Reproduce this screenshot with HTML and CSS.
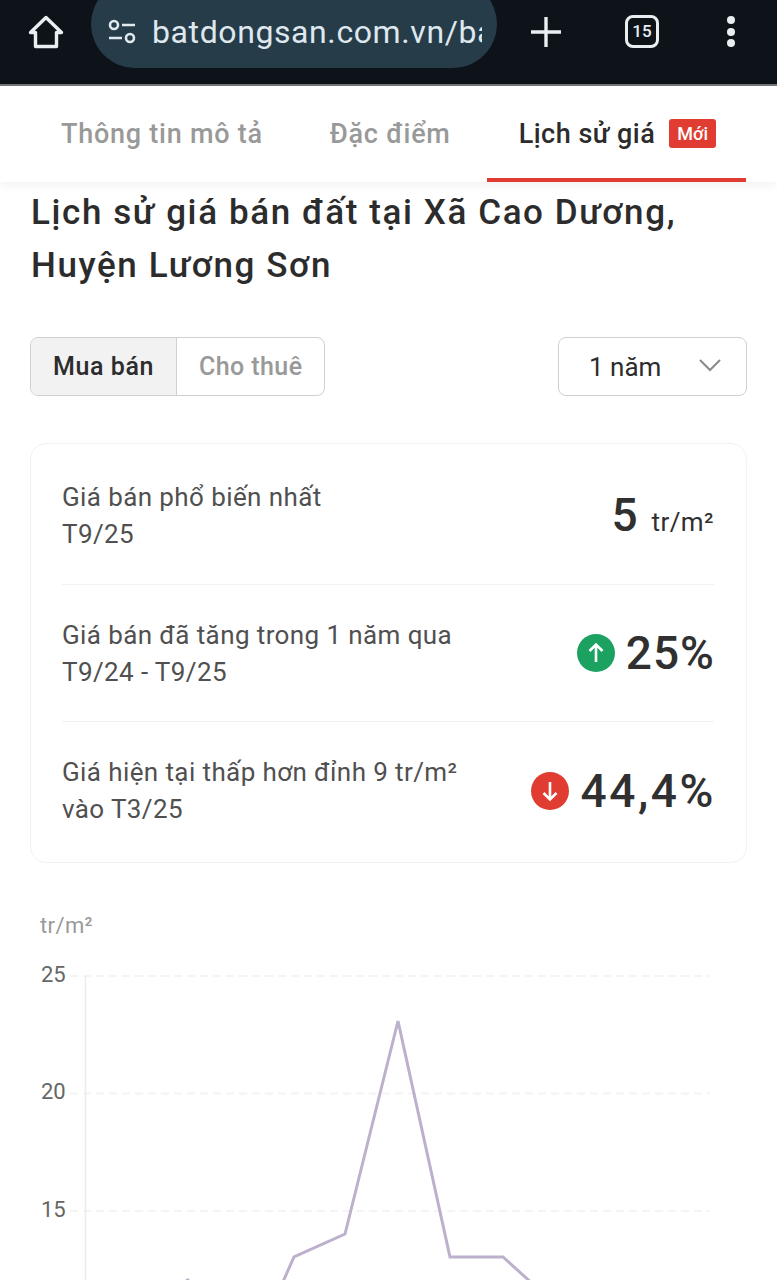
FILE: index.html
```html
<!DOCTYPE html>
<html lang="vi">
<head>
    <meta charset="UTF-8">
    <meta name="viewport" content="width=device-width, initial-scale=1.0">
    <title>Lịch sử giá</title>
    <link rel="stylesheet" href="styles.css">
</head>
<body>
    <div class="browser-bar">
        <svg class="home-icon" width="36" height="34" viewBox="0 0 36 34" fill="none" stroke="#e8eef2" stroke-width="3.4" stroke-linejoin="round">
            <path d="M18 2.5 2.5 17.5H7.5V31.5H28.5V17.5H33.5Z"/>
        </svg>
        <div class="url-pill">
            <svg class="tune-icon" width="30" height="28" viewBox="0 0 30 28" fill="none" stroke="#e0e8f0" stroke-width="2.6">
                <circle cx="7" cy="7" r="4"/>
                <path d="M15 7H28M2 20H15"/>
                <circle cx="23" cy="20" r="4"/>
            </svg>
            <span class="url-text">batdongsan.com.vn/ba</span>
        </div>
        <svg class="plus-icon" width="32" height="32" viewBox="0 0 32 32" stroke="#e8eef2" stroke-width="3.4">
            <path d="M16 1V31M1 16H31"/>
        </svg>
        <div class="tab-count">15</div>
        <div class="menu-dots"><i></i><i></i><i></i></div>
    </div>

    <div class="tabs">
        <div class="tab">Thông tin mô tả</div>
        <div class="tab">Đặc điểm</div>
        <div class="tab active">Lịch sử giá <span class="badge">Mới</span></div>
    </div>

    <main class="content">
        <h1>Lịch sử giá bán đất tại Xã Cao Dương,<br>Huyện Lương Sơn</h1>

        <div class="filters">
            <div class="toggle">
                <div class="toggle-item selected">Mua bán</div>
                <div class="toggle-item">Cho thuê</div>
            </div>
            <div class="select">
                <span>1 năm</span>
                <svg width="24" height="14" viewBox="0 0 24 14" fill="none" stroke="#8a8a8a" stroke-width="2">
                    <path d="M2 2 12 12 22 2"/>
                </svg>
            </div>
        </div>

        <div class="card">
            <div class="row">
                <div class="row-text">Giá bán phổ biến nhất<br>T9/25</div>
                <div class="row-value price"><b>5</b><span class="unit">tr/m²</span></div>
            </div>
            <div class="row">
                <div class="row-text">Giá bán đã tăng trong 1 năm qua<br>T9/24 - T9/25</div>
                <div class="row-value">
                    <svg width="38" height="38" viewBox="0 0 38 38">
                        <circle cx="19" cy="19" r="19" fill="#1ba160"/>
                        <path d="M19 28V11M12.5 17 19 10.5 25.5 17" fill="none" stroke="#fff" stroke-width="2.6"/>
                    </svg>
                    <b>25%</b>
                </div>
            </div>
            <div class="row">
                <div class="row-text">Giá hiện tại thấp hơn đỉnh 9 tr/m²<br>vào T3/25</div>
                <div class="row-value wide">
                    <svg width="38" height="38" viewBox="0 0 38 38">
                        <circle cx="19" cy="19" r="19" fill="#e03c31"/>
                        <path d="M19 10V27M12.5 21 19 27.5 25.5 21" fill="none" stroke="#fff" stroke-width="2.6"/>
                    </svg>
                    <b>44,4%</b>
                </div>
            </div>
        </div>

        <svg class="chart" width="777" height="400" viewBox="0 880 777 400">
            <text class="chart-unit" x="40" y="932">tr/m²</text>
            <path class="grid" d="M70 975H710M70 1092.5H710M70 1210H710"/>
            <path class="axis" d="M85.5 975V1280"/>
            <text class="chart-label" x="41" y="981">25</text>
            <text class="chart-label" x="41" y="1098">20</text>
            <text class="chart-label" x="41" y="1216">15</text>
            <polyline class="line" points="136,1306 188,1279 241,1375 294,1256 345,1233 398,1020 450,1256 503,1256 555,1303"/>
        </svg>
    </main>
</body>
</html>
```

FILE: styles.css
```css
html, body {
    margin: 0;
    height: 1280px;
    overflow: hidden;
}
body {
    font-family: Roboto, "Noto Sans", sans-serif;
    background: #fff;
    color: #2c2c2c;
}

/* thanh trinh duyet */
.browser-bar {
    display: flex;
    align-items: flex-start;
    height: 84px;
    background: #0e1219;
    border-bottom: 2px solid #70757a;
    overflow: hidden;
}
.home-icon {
    margin: 15px 0 0 28px;
    flex: none;
}
.url-pill {
    display: flex;
    align-items: center;
    width: 406px;
    height: 88px;
    margin: -20px 0 0 27px;
    padding: 16px 15px 0 16px;
    box-sizing: border-box;
    background: #263c49;
    border-radius: 44px;
    flex: none;
}
.tune-icon {
    flex: none;
}
.url-text {
    min-width: 0;
    margin-left: 15px;
    font-size: 32px;
    letter-spacing: 0.6px;
    color: #dfe7ef;
    white-space: nowrap;
    overflow: hidden;
}
.plus-icon {
    margin: 16px 0 0 33px;
    flex: none;
}
.tab-count {
    width: 28px;
    height: 27px;
    margin: 15px 0 0 63px;
    border: 3.4px solid #e8eef2;
    border-radius: 8px;
    font-size: 17px;
    font-weight: 500;
    line-height: 27px;
    text-align: center;
    color: #e8eef2;
    flex: none;
}
.menu-dots {
    display: flex;
    flex-direction: column;
    gap: 3.5px;
    margin: 16px 0 0 68px;
}
.menu-dots i {
    width: 8px;
    height: 8px;
    background: #e8eef2;
    border-radius: 50%;
}

/* tab */
.tabs {
    display: flex;
    height: 96px;
    padding-left: 30px;
    background: #fff;
    box-shadow: 0 3px 10px rgba(0, 0, 0, 0.06);
    position: relative;
}
.tab {
    display: flex;
    align-items: center;
    padding: 0 31px;
    margin-right: 5px;
    font-size: 27px;
    font-weight: 500;
    letter-spacing: 0.75px;
    color: #999;
    white-space: nowrap;
    box-sizing: border-box;
}
.tab.active {
    color: #2c2c2c;
    gap: 14px;
    letter-spacing: 0.5px;
    border-bottom: 4px solid #e03c31;
    padding: 3px 30px 0 32px;
    margin-right: 0;
}
.badge {
    padding: 0 8px;
    height: 29px;
    line-height: 29px;
    background: #e03c31;
    color: #fff;
    font-size: 18px;
    letter-spacing: 0;
    border-radius: 3px;
}

.content {
    padding: 0 30px;
}
h1 {
    margin: 4px 0 0 1px;
    font-size: 35px;
    font-weight: 500;
    letter-spacing: 1.6px;
    line-height: 53px;
    color: #2c2c2c;
}

.filters {
    display: flex;
    justify-content: space-between;
    margin-top: 45px;
}
.toggle {
    display: flex;
    height: 59px;
    border: 1px solid #d0d0d0;
    border-radius: 8px;
    overflow: hidden;
    box-sizing: border-box;
}
.toggle-item {
    display: flex;
    align-items: center;
    padding: 0 22px;
    font-size: 25px;
    font-weight: 500;
    letter-spacing: 0.4px;
    color: #999;
}
.toggle-item.selected {
    background: #f2f2f2;
    color: #2c2c2c;
    letter-spacing: 0.6px;
    border-right: 1px solid #d0d0d0;
}
.select {
    display: flex;
    align-items: center;
    justify-content: space-between;
    width: 189px;
    height: 59px;
    padding: 0 24px 0 30px;
    border: 1px solid #d0d0d0;
    border-radius: 8px;
    font-size: 26px;
    box-sizing: border-box;
}
.select svg {
    margin-top: -4px;
}

.card {
    margin-top: 47px;
    padding: 0 32px 0 31px;
    height: 420px;
    border: 1px solid #f2f2f2;
    border-radius: 16px;
    box-sizing: border-box;
}
.row {
    display: flex;
    align-items: center;
    justify-content: space-between;
    height: 137px;
    border-top: 1px solid #f2f2f2;
    box-sizing: border-box;
}
.row:first-child {
    border-top: 0;
    height: 140px;
    padding-top: 2px;
}
.row-text {
    margin-top: 2px;
    font-size: 26px;
    letter-spacing: 0.4px;
    line-height: 37.5px;
    color: #505050;
}
.row-value {
    display: flex;
    align-items: center;
    gap: 11px;
    font-size: 46px;
    letter-spacing: 1px;
    color: #303030;
}
.row-value b {
    font-weight: 500;
    margin-right: -1px;
}
.row-value.wide {
    margin-top: 2px;
    letter-spacing: 2.6px;
}
.row-value.wide b {
    margin-right: -2px;
}
.row-value.price {
    align-items: baseline;
    gap: 15px;
    letter-spacing: 0;
}
.unit {
    font-size: 26px;
    letter-spacing: 0.4px;
}

/* bieu do */
.chart {
    display: block;
    margin: 18px 0 0 -30px;
}
.chart-unit {
    font-size: 22px;
    letter-spacing: 0.4px;
    fill: #999;
}
.chart-label {
    font-size: 22px;
    fill: #666;
}
.grid {
    stroke: #f4f4f4;
    stroke-width: 2;
    stroke-dasharray: 8 5;
    fill: none;
}
.axis {
    stroke: #ececec;
    stroke-width: 1.5;
    fill: none;
}
.line {
    fill: none;
    stroke: #bcb0cc;
    stroke-width: 3;
}
```
